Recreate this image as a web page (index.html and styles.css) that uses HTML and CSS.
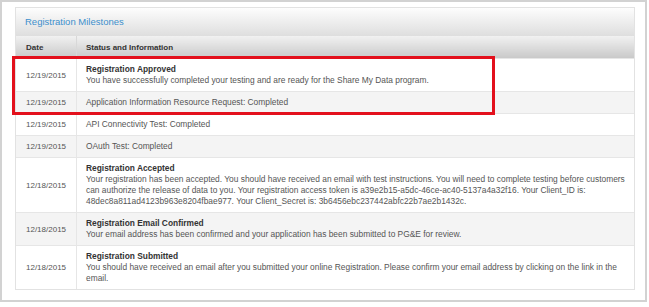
FILE: index.html
```html
<!DOCTYPE html>
<html lang="en">
<head>
    <meta charset="UTF-8">
    <title>Registration Milestones</title>
    <link rel="stylesheet" href="styles.css">
</head>
<body>
    <div class="frame">
        <div class="panel">
            <div class="panel-title">Registration Milestones</div>
            <table class="milestones">
                <thead>
                    <tr>
                        <th class="date-col">Date</th>
                        <th>Status and Information</th>
                    </tr>
                </thead>
                <tbody>
                    <tr>
                        <td class="date-col">12/19/2015</td>
                        <td>
                            <div class="title">Registration Approved</div>
                            You have successfully completed your testing and are ready for the Share My Data program.
                        </td>
                    </tr>
                    <tr>
                        <td class="date-col">12/19/2015</td>
                        <td>Application Information Resource Request: Completed</td>
                    </tr>
                    <tr>
                        <td class="date-col">12/19/2015</td>
                        <td>API Connectivity Test: Completed</td>
                    </tr>
                    <tr>
                        <td class="date-col">12/19/2015</td>
                        <td>OAuth Test: Completed</td>
                    </tr>
                    <tr>
                        <td class="date-col">12/18/2015</td>
                        <td>
                            <div class="title">Registration Accepted</div>
                            Your registration has been accepted. You should have received an email with test instructions. You will need to complete testing before customers can authorize the release of data to you. Your registration access token is a39e2b15-a5dc-46ce-ac40-5137a4a32f16. Your Client_ID is: 48dec8a811ad4123b963e8204fbae977. Your Client_Secret is: 3b6456ebc237442abfc22b7ae2b1432c.
                        </td>
                    </tr>
                    <tr>
                        <td class="date-col">12/18/2015</td>
                        <td>
                            <div class="title">Registration Email Confirmed</div>
                            Your email address has been confirmed and your application has been submitted to PG&amp;E for review.
                        </td>
                    </tr>
                    <tr>
                        <td class="date-col">12/18/2015</td>
                        <td>
                            <div class="title">Registration Submitted</div>
                            You should have received an email after you submitted your online Registration. Please confirm your email address by clicking on the link in the email.
                        </td>
                    </tr>
                </tbody>
            </table>
        </div>
        <!-- annotation box around the latest two milestones -->
        <div class="highlight"></div>
    </div>
</body>
</html>
```

FILE: styles.css
```css
body {
    margin: 0;
    background-color: #fff;
    font-family: "Liberation Sans", Arial, sans-serif;
}

.frame {
    position: relative;
    width: 630px;
    height: 293px;
    border: 2px solid #d2d2d2;
    padding: 5px 0 0 13px;
}

.panel {
    width: 618px;
    border: 1px solid #e2e2e2;
    background-color: #fff;
}

.panel-title {
    height: 28px;
    line-height: 28px;
    padding-left: 9px;
    font-size: 9.5px;
    color: #3d8fcc;
    background: linear-gradient(#fdfdfd, #dedede);
}

.milestones {
    width: 100%;
    border-collapse: collapse;
    font-size: 8.4px;
    line-height: 11px;
    color: #555;
}

.milestones th {
    height: 22px;
    padding: 0 9px;
    text-align: left;
    font-size: 8px;
    font-weight: bold;
    color: #333;
    background: linear-gradient(#f1f1f1, #c9c9c9);
}

.milestones td {
    padding: 5px 9px;
    border-top: 1px solid #e6e6e6;
    vertical-align: middle;
}

.milestones tbody tr:nth-child(even) td {
    background-color: #f4f4f4;
}

.milestones .date-col {
    width: 41px;
    padding-left: 10px;
    font-size: 8px;
    border-right: 1px solid #e6e6e6;
}

.milestones th.date-col {
    border-right: 1px solid #d8d8d8;
}

.title {
    font-weight: bold;
    color: #333;
}

.highlight {
    position: absolute;
    left: 10px;
    top: 54px;
    width: 477px;
    height: 53px;
    border: 3px solid #e3101c;
}
```
